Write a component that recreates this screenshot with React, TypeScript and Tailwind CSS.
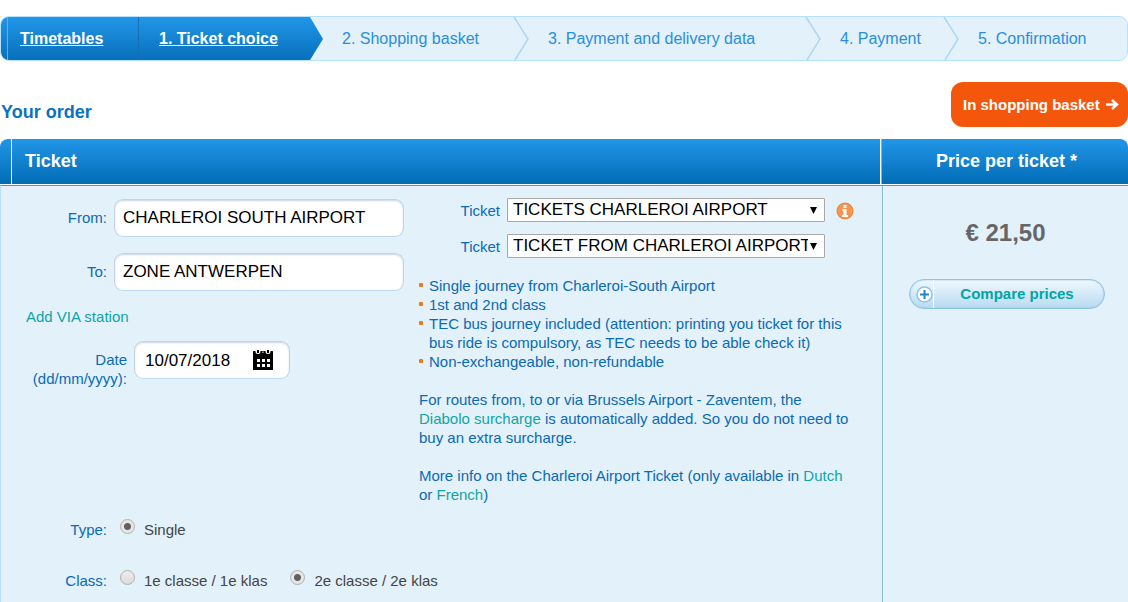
import { useState } from "react";
import type { ReactNode } from "react";

interface Step {
  label: string;
  width: string;
}

const steps: Step[] = [
  { label: "2. Shopping basket", width: "w-[206px]" },
  { label: "3. Payment and delivery data", width: "w-[292px]" },
  { label: "4. Payment", width: "w-[138px]" },
];

const Steps = () => (
  <nav className="mt-4 overflow-hidden rounded-[9px] border border-[#b8e2fc] bg-[#e3f1fb] text-base">
    <ol className="flex h-[43px] items-stretch leading-[43px] text-[#2a8fdb]">
      <li className="w-[138px] border-r border-[#1570b8] bg-linear-to-b from-[#2196e8] to-[#0670bb] pl-[6px]">
        <a
          href="#timetables"
          className="block border-l border-[#5cb3ef] pl-3 font-bold text-white underline"
        >
          Timetables
        </a>
      </li>
      <li className="flex w-[184px] justify-between">
        <a
          href="#ticket"
          className="flex-1 bg-linear-to-b from-[#2196e8] to-[#0670bb] pl-5 font-bold text-white underline"
        >
          1. Ticket choice
        </a>
        <svg width="14" height="43" viewBox="0 0 14 43" aria-hidden="true">
          <defs>
            <linearGradient id="tip" x1="0" y1="0" x2="0" y2="1">
              <stop offset="0" stopColor="#2196e8" />
              <stop offset="1" stopColor="#0670bb" />
            </linearGradient>
          </defs>
          <path d="M0 0h1l13 22L1 43H0z" fill="url(#tip)" />
        </svg>
      </li>
      {steps.map((step) => (
        <li
          key={step.label}
          className={`flex justify-between pl-[19px] whitespace-nowrap ${step.width}`}
        >
          <span>{step.label}</span>
          <svg width="16" height="43" viewBox="0 0 16 43" fill="none" aria-hidden="true">
            <path d="M1 0l14 22L2 43" stroke="#a9d7f7" strokeWidth="1.5" />
          </svg>
        </li>
      ))}
      <li className="flex-1 pl-[19px] whitespace-nowrap">5. Confirmation</li>
    </ol>
  </nav>
);

const fieldStyle =
  "h-[38px] rounded-[9px] border border-[#c3d3e0] border-b-[#bcdaf4] bg-white text-[17px] text-black shadow-[inset_0_1px_2px_#c9d6e2]";

const Bullet = ({ children }: { children: ReactNode }) => (
  <li className="relative pl-[10px] before:absolute before:top-[7px] before:left-0 before:h-1 before:w-1 before:rounded-[1px] before:bg-[#f07818]">
    {children}
  </li>
);

const SelectRow = ({ id, option, children }: { id: string; option: string; children?: ReactNode }) => (
  <div className="flex items-center">
    <label htmlFor={id} className="w-[81px] text-right">
      Ticket
    </label>
    <div className="relative ml-[7px] w-[318px]">
      <select
        id={id}
        className="block h-6 w-full appearance-none overflow-hidden rounded-[1px] border border-[#a9a9a9] bg-white pr-4 pl-[5px] text-[17px] leading-[22px] text-black"
      >
        <option>{option}</option>
      </select>
      <svg
        width="7"
        height="7"
        viewBox="0 0 7 7"
        className="pointer-events-none absolute top-[9px] right-2"
        aria-hidden="true"
      >
        <path d="M0 0h7L3.500 7z" fill="#000" />
      </svg>
    </div>
    {children}
  </div>
);

interface RadioProps {
  name: string;
  label: string;
  checked: boolean;
  onChange: () => void;
}

const Radio = ({ name, label, checked, onChange }: RadioProps) => (
  <label className="flex items-start text-[#444]">
    <input
      type="radio"
      name={name}
      checked={checked}
      onChange={onChange}
      className="mt-px mr-[9px] h-[15px] w-[15px] appearance-none rounded-full border border-[#b0b0b0] bg-linear-to-b from-[#ececec] to-[#dcdcdc] checked:bg-[radial-gradient(circle,#606060_3px,#e6e6e6_4px)]"
    />
    <span className="pt-[2px]">{label}</span>
  </label>
);

const CalendarIcon = () => (
  <svg width="22" height="22" viewBox="0 0 22 22" aria-hidden="true">
    <rect x="1" y="2" width="20" height="19" rx="0.5" fill="#000" />
    <circle cx="6" cy="2.500" r="2.500" fill="#fff" />
    <circle cx="16" cy="2.500" r="2.500" fill="#fff" />
    <path d="M10.500 2.500h1V4h-1z" fill="#fff" />
    <path d="M5 1h2v3H5zM15 1h2v3h-2z" fill="#000" />
    <path
      d="M5 10h3v3H5zM10 10h3v3h-3zM15 10h3v3h-3zM5 15h3v3H5zM10 15h3v3h-3zM15 15h3v3h-3z"
      fill="#fff"
    />
  </svg>
);

const InfoIcon = () => (
  <svg width="18" height="18" viewBox="0 0 18 18" aria-hidden="true">
    <circle cx="9" cy="9" r="8.500" fill="#f0873c" />
    <circle cx="9" cy="9" r="6.500" fill="#f29450" stroke="#f5a368" />
    <path d="M7.500 3h3v3h-3zM6.500 7h4v6h1.500v2H6v-2h1.500V9h-1z" fill="#fff" />
  </svg>
);

const App = () => {
  const [from, setFrom] = useState("CHARLEROI SOUTH AIRPORT");
  const [to, setTo] = useState("ZONE ANTWERPEN");
  const [date, setDate] = useState("10/07/2018");
  const [travelClass, setTravelClass] = useState("2");

  return (
    <div className="flex min-h-screen flex-col bg-white font-['Liberation_Sans',Arial,sans-serif] text-[15px] leading-[19px] text-[#0a6ab3]">
      <Steps />

      <div className="mt-[21px] flex items-center justify-between">
        <h1 className="pt-[14px] pl-px text-lg font-bold text-[#0a73c0]">Your order</h1>
        <button className="flex h-[45px] w-[177px] items-center gap-[6px] rounded-xl bg-[#f4570c] pl-3 font-bold whitespace-nowrap text-white">
          In shopping basket
          <svg width="13" height="12" viewBox="0 0 13 12" fill="none" aria-hidden="true">
            <path d="M0 5.500h11M6 1l5 4.500L6 10" stroke="#fff" strokeWidth="2.400" />
          </svg>
        </button>
      </div>

      <div className="mt-3 grid h-[45px] grid-cols-[1fr_247px] overflow-hidden rounded-t-[8px] bg-linear-to-b from-[#2196e8] to-[#006cb5] text-lg leading-[45px] font-bold text-white">
        <h2 className="ml-[11px] border-x border-white pl-[13px]">Ticket</h2>
        <h2 className="border-l border-[#6db8ec] pl-[3px] text-center">Price per ticket *</h2>
      </div>

      <main className="mt-px grid flex-1 grid-cols-[1fr_246px] border-t border-l border-t-[#4a96cd] border-l-[#b8e2fc] bg-[#e3f1fb]">
        <form className="pt-3">
          <div className="flex">
            <div className="w-[418px] shrink-0 pt-px">
              <div className="flex items-center">
                <label htmlFor="from" className="w-[106px] pb-[2px] text-right">
                  From:
                </label>
                <input
                  id="from"
                  value={from}
                  onChange={(e) => setFrom(e.target.value)}
                  className={`ml-[7px] w-[290px] px-2 ${fieldStyle}`}
                />
              </div>
              <div className="mt-4 flex items-center">
                <label htmlFor="to" className="w-[106px] pb-[2px] text-right">
                  To:
                </label>
                <input
                  id="to"
                  value={to}
                  onChange={(e) => setTo(e.target.value)}
                  className={`ml-[7px] w-[290px] px-2 ${fieldStyle}`}
                />
              </div>
              <a href="#via" className="mt-4 ml-[25px] block w-fit text-[#0fa5a5]">
                Add VIA station
              </a>
              <div className="mt-[15px] flex items-start">
                <label htmlFor="date" className="w-[126px] pt-[9px] text-right">
                  Date
                  <br />
                  (dd/mm/yyyy):
                </label>
                <div className={`ml-[7px] flex w-[156px] items-center ${fieldStyle}`}>
                  <input
                    id="date"
                    value={date}
                    onChange={(e) => setDate(e.target.value)}
                    className="w-[117px] pl-[10px]"
                  />
                  <button type="button" aria-label="Choose date">
                    <CalendarIcon />
                  </button>
                </div>
              </div>
            </div>

            <div className="w-[440px]">
              <SelectRow id="ticket-group" option="TICKETS CHARLEROI AIRPORT">
                <a href="#info" aria-label="Ticket information" className="ml-[11px] pt-[2px]">
                  <InfoIcon />
                </a>
              </SelectRow>
              <div className="mt-3">
                <SelectRow id="ticket-type" option="TICKET FROM CHARLEROI AIRPORT" />
              </div>
              <div className="mt-[18px] max-w-[432px]">
                <ul>
                  <Bullet>Single journey from Charleroi-South Airport</Bullet>
                  <Bullet>1st and 2nd class</Bullet>
                  <Bullet>
                    TEC bus journey included (attention: printing you ticket for this bus ride is
                    compulsory, as TEC needs to be able check it)
                  </Bullet>
                  <Bullet>Non-exchangeable, non-refundable</Bullet>
                </ul>
                <p className="mt-[19px]">
                  For routes from, to or via Brussels Airport - Zaventem, the{" "}
                  <a href="#diabolo" className="text-[#0fa5a5]">
                    Diabolo surcharge
                  </a>{" "}
                  is automatically added. So you do not need to buy an extra surcharge.
                </p>
                <p className="mt-[19px]">
                  More info on the Charleroi Airport Ticket (only available in{" "}
                  <a href="#dutch" className="text-[#0fa5a5]">
                    Dutch
                  </a>{" "}
                  or{" "}
                  <a href="#french" className="text-[#0fa5a5]">
                    French
                  </a>
                  )
                </p>
              </div>
            </div>
          </div>

          <div role="group" aria-labelledby="type-label" className="mt-[14px] flex">
            <span id="type-label" className="w-[106px] pt-[2px] text-right">
              Type:
            </span>
            <div className="ml-[13px]">
              <Radio name="type" label="Single" checked onChange={() => {}} />
            </div>
          </div>
          <div role="group" aria-labelledby="class-label" className="mt-[30px] flex">
            <span id="class-label" className="w-[106px] pt-[2px] text-right">
              Class:
            </span>
            <div className="ml-[13px] flex gap-[23px]">
              <Radio
                name="class"
                label="1e classe / 1e klas"
                checked={travelClass === "1"}
                onChange={() => setTravelClass("1")}
              />
              <Radio
                name="class"
                label="2e classe / 2e klas"
                checked={travelClass === "2"}
                onChange={() => setTravelClass("2")}
              />
            </div>
          </div>
        </form>

        <aside className="border-l border-[#7dbbe4] pt-8 shadow-[inset_1px_0_0_#fff]">
          <p className="text-center text-2xl leading-[30px] font-bold text-[#666]">€ 21,50</p>
          <button className="mt-[31px] ml-[26px] flex h-[30px] w-[196px] items-stretch overflow-hidden rounded-full border border-[#8cc4e4] bg-linear-to-b from-[#f0f8fe] to-[#b9daf1] font-bold text-[#00a5a5] shadow-[inset_0_0_2px_#8cc4e4]">
            <span className="flex w-6 items-center justify-end border-r border-white">
              <svg width="17" height="17" viewBox="0 0 17 17" fill="none" aria-hidden="true">
                <circle cx="8.500" cy="8.500" r="7.500" fill="#fff" stroke="#8fc3e6" strokeWidth="1.500" />
                <path d="M8.500 4v9M4 8.500h9" stroke="#1f86c8" strokeWidth="2" />
              </svg>
            </span>
            <span className="flex-1 self-center pr-1 pb-px">Compare prices</span>
          </button>
        </aside>
      </main>
    </div>
  );
};

export default App;
